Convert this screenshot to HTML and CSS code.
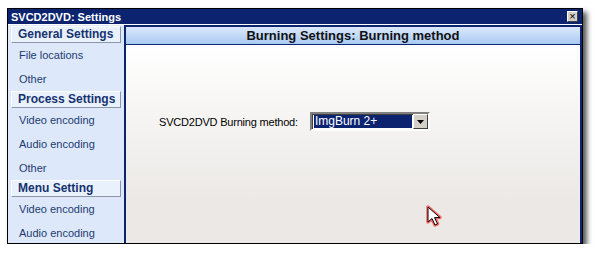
FILE: index.html
```html
<!DOCTYPE html>
<html lang="en">
<head>
    <meta charset="UTF-8">
    <title>SVCD2DVD: Settings</title>
    <link rel="stylesheet" href="styles.css">
</head>
<body>
    <div class="window">
        <div class="titlebar">
            <span>SVCD2DVD: Settings</span>
            <div class="close">&#215;</div>
        </div>
        <div class="frame">
            <div class="sidebar">
                <div class="group">General Settings</div>
                <div class="item">File locations</div>
                <div class="item">Other</div>
                <div class="group">Process Settings</div>
                <div class="item">Video encoding</div>
                <div class="item">Audio encoding</div>
                <div class="item">Other</div>
                <div class="group">Menu Setting</div>
                <div class="item">Video encoding</div>
                <div class="item">Audio encoding</div>
            </div>
            <div class="main">
                <div class="main-head">Burning Settings: Burning method</div>
                <div class="main-body">
                    <div class="field">
                        <label>SVCD2DVD Burning method:</label>
                        <div class="combo">
                            <div class="combo-value">ImgBurn 2+</div>
                            <div class="combo-btn">
                                <svg width="7" height="4" viewBox="0 0 7 4"><path d="M0 0h7L3.5 4z" fill="#000"/></svg>
                            </div>
                        </div>
                    </div>
                </div>
            </div>
        </div>
        <svg class="cursor" width="18" height="24" viewBox="0 0 18 24">
            <path d="M3 2v15l4-3.5 3 6.5 2.5-1.2-3-6.2h5.5z" fill="#fff" stroke="#ff4040" stroke-width="3.5" stroke-linejoin="round" opacity=".75"/>
            <path d="M3 2v15l4-3.5 3 6.5 2.5-1.2-3-6.2h5.5z" fill="#fff" stroke="#000" stroke-width="1"/>
        </svg>
    </div>
</body>
</html>
```

FILE: styles.css
```css
body {
    margin: 0;
    background-color: #fff;
    font-family: "Liberation Sans", Arial, sans-serif;
}

.window {
    position: relative;
    margin: 8px 0 0 7px;
    width: 574px;
    border: 1px solid #000;
    background-color: #fff;
    box-shadow: 4px 4px 5px rgba(0, 0, 0, 0.65);
}

.titlebar {
    display: flex;
    justify-content: space-between;
    align-items: center;
    height: 15px;
    padding: 0 4px 0 3px;
    background-color: #0c2470;
    color: #fff;
    font-size: 11px;
    font-weight: bold;
    border-bottom: 1px solid #fff;
}

.close {
    width: 9px;
    height: 9px;
    border: 1px solid;
    border-color: #fff #404040 #404040 #fff;
    background-color: #d4d0c8;
    color: #000;
    font-size: 11px;
    line-height: 8px;
    text-align: center;
    font-weight: normal;
}

.frame {
    display: flex;
    height: 218px;
    overflow: hidden;
}

.sidebar {
    width: 110px;
    padding: 1px 3px 0 3px;
    background-color: #dde9fb;
}

.group {
    height: 15px;
    line-height: 15px;
    padding-left: 6px;
    border: 1px solid;
    border-color: #fff #8d96a6 #8d96a6 #fff;
    background-color: #e9f1fd;
    color: #16336f;
    font-size: 12px;
    font-weight: bold;
}

.item {
    height: 24px;
    line-height: 25px;
    padding-left: 8px;
    color: #1d3a70;
    font-size: 11px;
}

.main {
    flex: 1;
    display: flex;
    flex-direction: column;
    border: 2px solid #0c2470;
    border-bottom: none;
}

.main-head {
    height: 17px;
    line-height: 17px;
    border-bottom: 1px solid #0c2470;
    background: linear-gradient(#dce9fc, #a9c9f3);
    color: #111;
    font-size: 13px;
    font-weight: bold;
    text-align: center;
}

.main-body {
    flex: 1;
    padding: 67px 0 0 33px;
    background: linear-gradient(#fff, #ebe8e5 80%);
}

.field {
    display: flex;
    align-items: center;
    gap: 12px;
    font-size: 11px;
    color: #000;
}

.field label {
    letter-spacing: -0.2px;
}

.combo {
    display: flex;
    width: 116px;
    height: 15px;
    border: 2px solid;
    border-color: #808080 #fff #fff #808080;
    box-shadow: inset 1px 1px 0 #404040;
    background-color: #fff;
}

.combo-value {
    flex: 1;
    margin: 1px 1px 1px 2px;
    padding-left: 1px;
    background-color: #0c2470;
    color: #fff;
    font-size: 12px;
    line-height: 13px;
}

.combo-btn {
    display: flex;
    align-items: center;
    justify-content: center;
    width: 13px;
    border: 1px solid;
    border-color: #fff #404040 #404040 #fff;
    background-color: #d4d0c8;
}

.cursor {
    position: absolute;
    left: 417px;
    top: 196px;
}
```
